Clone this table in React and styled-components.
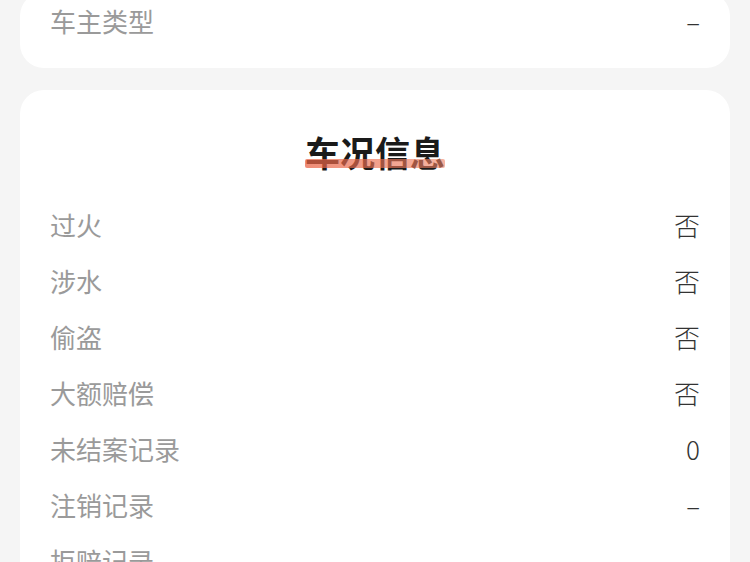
import React from 'react'
import styled, { createGlobalStyle } from 'styled-components'

const GlobalStyle = createGlobalStyle`
  html, body {
    margin: 0;
    padding: 0;
    background: #f5f5f5;
    font-family: 'Noto Sans CJK SC', 'Noto Sans', sans-serif;
    overflow: hidden;
  }
`

const Page = styled.div`
  display: flex;
  flex-direction: column;
  gap: 22px;
  padding: 0 20px;
  margin-top: -8px;
`

const Card = styled.div`
  background: #fff;
  border-radius: 24px;
  padding: ${p => p.$top}px 30px ${p => p.$bottom}px;
`

const Title = styled.div`
  display: flex;
  justify-content: center;
  margin-bottom: 26px;
`

// the highlight bar sits over the lower part of the glyphs
const TitleText = styled.h2`
  position: relative;
  margin: 0;
  font-size: 35px;
  line-height: 36px;
  font-weight: 700;
  color: #1a1a1a;
  &::after {
    content: '';
    position: absolute;
    left: 0;
    right: 0;
    bottom: 2px;
    height: 9px;
    background: linear-gradient(90deg, rgba(232, 96, 66, 0.72), rgba(240, 130, 100, 0.6));
    border-radius: 2px;
  }
`

const Row = styled.div`
  display: flex;
  align-items: center;
  justify-content: space-between;
  height: 56px;
  font-size: 26px;
`

const Label = styled.span`
  color: #9a9a9a;
  font-weight: 400;
`

const Value = styled.span`
  color: #333;
  font-weight: 300;
`

const rows = [
  ['过火', '否'],
  ['涉水', '否'],
  ['偷盗', '否'],
  ['大额赔偿', '否'],
  ['未结案记录', '0'],
  ['注销记录', '–'],
  ['拒赔记录', '–'],
]

export default function App() {
  return (
    <>
      <GlobalStyle />
      <Page>
        <Card $top={0} $bottom={20}>
          <Row>
            <Label>车主类型</Label>
            <Value>–</Value>
          </Row>
        </Card>
        <Card $top={44} $bottom={30}>
          <Title>
            <TitleText>车况信息</TitleText>
          </Title>
          {rows.map(([k, v]) => (
            <Row key={k}>
              <Label>{k}</Label>
              <Value>{v}</Value>
            </Row>
          ))}
        </Card>
      </Page>
    </>
  )
}
